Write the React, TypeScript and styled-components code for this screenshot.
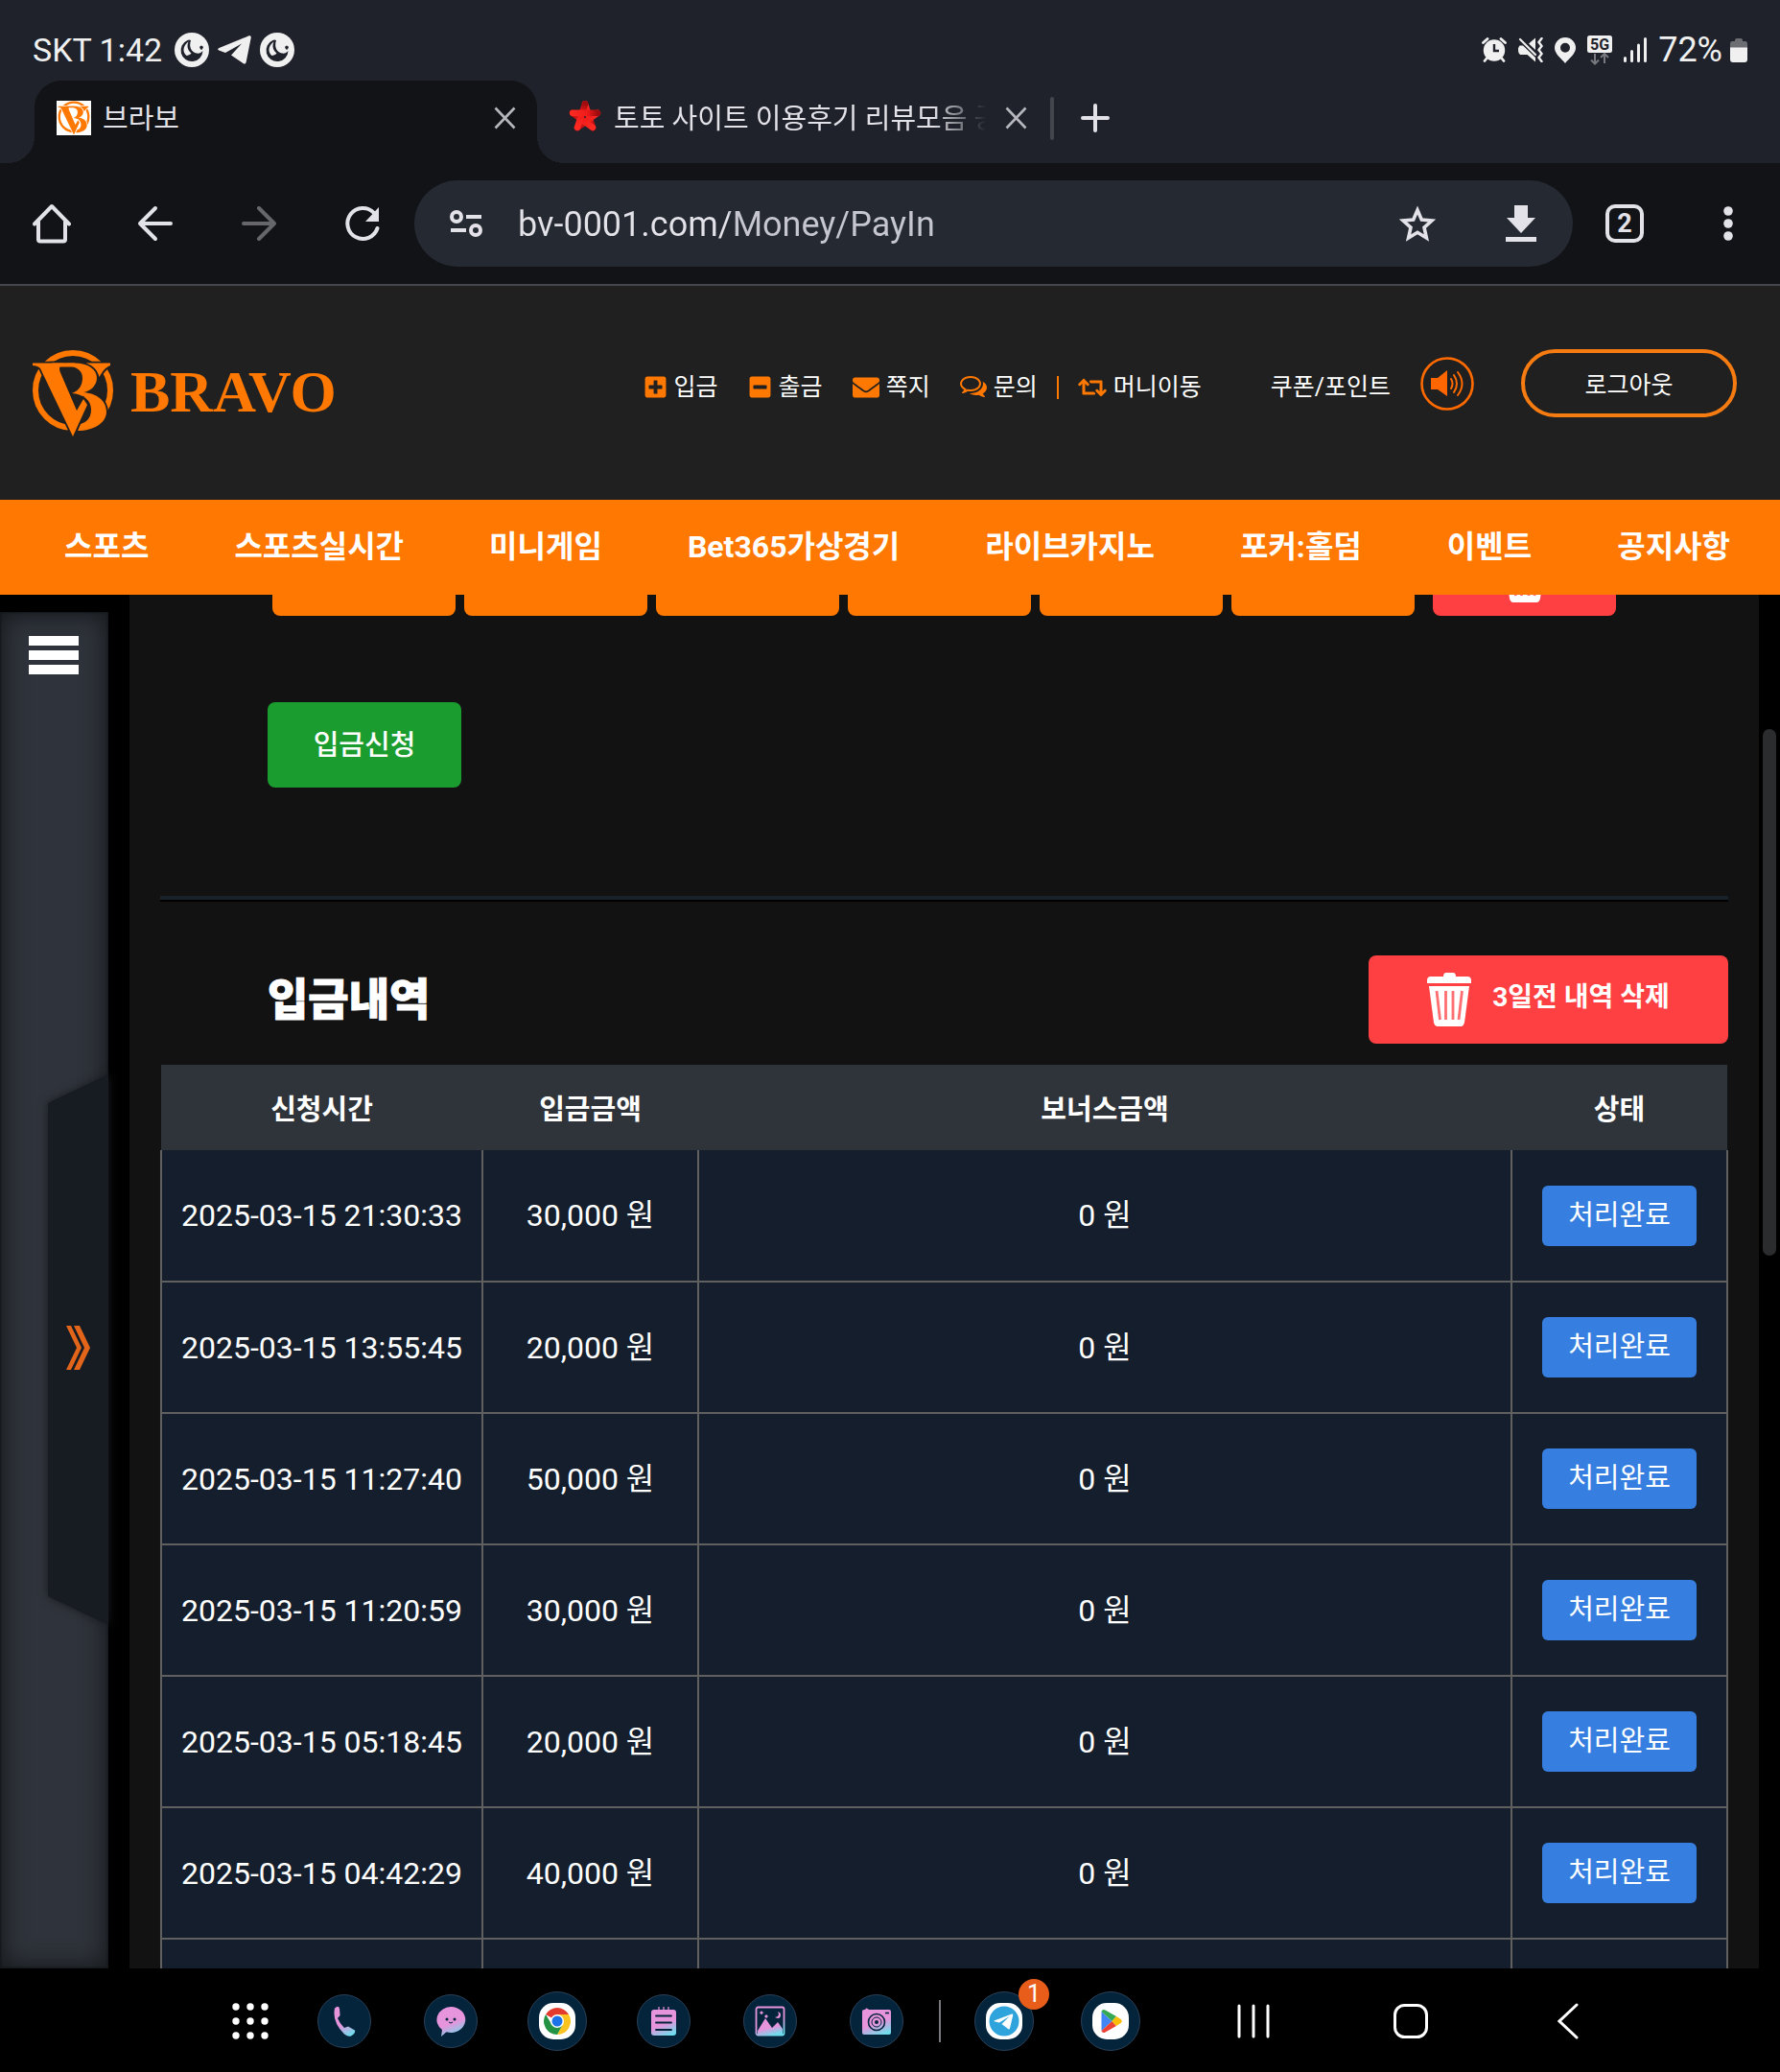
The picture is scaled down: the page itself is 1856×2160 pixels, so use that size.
import React from "react";
import styled, { createGlobalStyle } from "styled-components";
import { FaPlusSquare, FaMinusSquare, FaEnvelope, FaRetweet } from "react-icons/fa";

const ORANGE = "#ff7802";
const FONT = '"Roboto", "Noto Sans CJK KR", sans-serif';

const GlobalStyle = createGlobalStyle`
  *, *::before, *::after { box-sizing: border-box; }
  body { margin: 0; background: #000; font-family: ${FONT}; color: #fff; }
  button, input { font-family: inherit; color: inherit; }
  button { border: 0; padding: 0; background: none; cursor: pointer; }
  a { color: inherit; text-decoration: none; }
  svg { display: block; flex: none; }
`;

const Screen = styled.div`
  display: flex;
  flex-direction: column;
  height: 100vh;
  overflow: hidden;
`;

/* ---------- status bar ---------- */

const StatusBar = styled.div`
  display: flex;
  align-items: center;
  justify-content: space-between;
  height: 84px;
  padding: 20px 34px 0;
  background: #1f222b;
  color: #f0f0f0;
  line-height: 40px;
`;

const StatusGroup = styled.div<{ $gap: number }>`
  display: flex;
  align-items: center;
  gap: ${(p) => p.$gap}px;
`;

const Clock = styled.span`
  margin-right: 4px;
  font-size: 34px;
`;

const Charge = styled.span`
  font-size: 36px;
`;

/* ---------- browser tabs ---------- */

const TabStrip = styled.div`
  display: flex;
  align-items: center;
  height: 86px;
  padding-left: 36px;
  background: #1f222b;
  color: #e3e2e8;
`;

const Tab = styled.div<{ $active?: boolean }>`
  position: relative;
  display: flex;
  align-items: center;
  gap: 12px;
  width: ${(p) => (p.$active ? 524 : 535)}px;
  height: 86px;
  padding: ${(p) => (p.$active ? "0 22px 8px 23px" : "0 24px 8px 32px")};
  border-radius: 28px 28px 0 0;
  background: ${(p) => (p.$active ? "#121317" : "transparent")};

  &::before,
  &::after {
    content: ${(p) => (p.$active ? '""' : "none")};
    position: absolute;
    bottom: 0;
    width: 28px;
    height: 28px;
  }
  &::before {
    right: 100%;
    background: radial-gradient(circle at 0 0, transparent 28px, #121317 28px);
  }
  &::after {
    left: 100%;
    background: radial-gradient(circle at 100% 0, transparent 28px, #121317 28px);
  }
`;

const TabTitle = styled.span<{ $fade?: boolean }>`
  flex: 1;
  min-width: 0;
  padding-top: 2px;
  overflow: hidden;
  white-space: nowrap;
  font-size: 29px;
  line-height: 40px;
  mask-image: ${(p) => (p.$fade ? "linear-gradient(to right, #000 84%, transparent 98%)" : "none")};
`;

const TabDivider = styled.span`
  width: 4px;
  height: 45px;
  margin-bottom: 8px;
  border-radius: 2px;
  background: #44464e;
`;

const NewTab = styled.button`
  margin: 0 0 8px 28px;
`;

/* ---------- browser toolbar ---------- */

const Toolbar = styled.div`
  display: flex;
  align-items: center;
  height: 128px;
  padding: 0 49px 0 34px;
  border-bottom: 2px solid #46474c;
  background: #121317;
`;

const ToolButtons = styled.div`
  display: flex;
  width: 398px;
  gap: 68px;
`;

const ToolButton = styled.button<{ $dim?: boolean }>`
  opacity: ${(p) => (p.$dim ? 0.4 : 1)};
`;

const AddressBar = styled.div`
  display: flex;
  align-items: center;
  flex: 1;
  height: 90px;
  padding: 0 38px 0 36px;
  border-radius: 45px;
  background: #252932;
`;

const Address = styled.input`
  flex: 1;
  min-width: 0;
  margin: 0 34px 0 36px;
  padding: 2px 0 0;
  border: 0;
  outline: 0;
  font-size: 36px;
  line-height: 48px;
  color: #e3e2e8;
  background: linear-gradient(to right, #e3e2e8 220px, #c5c6d0 220px) text;
  -webkit-text-fill-color: transparent;
`;

const DownloadButton = styled.button`
  margin-left: 73px;
`;

const TabCount = styled.button`
  display: grid;
  place-items: center;
  width: 40px;
  height: 40px;
  margin: 0 83px 0 34px;
  border: 4px solid #e3e2e8;
  border-radius: 10px;
  font-size: 27px;
  font-weight: 700;
  line-height: 28px;
  color: #e3e2e8;
`;

/* ---------- site header ---------- */

const SiteHeader = styled.header`
  display: flex;
  align-items: center;
  justify-content: space-between;
  height: 223px;
  padding: 0 45px 0 34px;
  background: #202020;
`;

const Brand = styled.a`
  display: flex;
  align-items: center;
  gap: 18px;
  color: ${ORANGE};
`;

const BrandName = styled.span`
  padding-bottom: 4px;
  font-family: "Liberation Serif", serif;
  font-size: 62px;
  font-weight: 700;
  line-height: 80px;
`;

const HeaderTools = styled.div`
  display: flex;
  align-items: center;
  padding-bottom: 20px;
  font-size: 25px;
  line-height: 36px;
`;

const HeaderLinks = styled.nav`
  display: flex;
  align-items: center;
  gap: 31px;
  padding-top: 8px;
`;

const HeaderLink = styled.a`
  display: flex;
  align-items: center;
  gap: 7px;

  svg { color: ${ORANGE}; }
`;

const LinkPair = styled.div`
  display: flex;
  align-items: center;
  gap: 20px;
`;

const Bar = styled.span`
  width: 2px;
  height: 24px;
  background: ${ORANGE};
`;

const CouponLink = styled.a`
  margin-left: 72px;
  padding-top: 8px;
`;

const SpeakerButton = styled.button`
  margin: 0 49px 0 31px;
`;

const LogoutButton = styled.button`
  width: 225px;
  height: 71px;
  padding-bottom: 2px;
  border: 4px solid #f67c12;
  border-radius: 36px;
  font-size: 25px;
`;

const MainNav = styled.nav`
  display: flex;
  align-items: center;
  justify-content: space-between;
  height: 99px;
  padding: 0 52px 2px 67px;
  background: ${ORANGE};
  font-size: 32px;
  font-weight: 700;
  line-height: 44px;
`;

/* ---------- page body ---------- */

const Body = styled.div`
  display: flex;
  flex: 1;
  min-height: 0;
`;

const Sidebar = styled.aside`
  display: flex;
  flex-direction: column;
  width: 113px;
  margin: 18px 22px 0 0;
  background: #2f333b;
  box-shadow: inset 0 0 2px 1px #14171a, inset 0 0 24px 4px #171b1e;
`;

const MenuButton = styled.button`
  display: flex;
  flex-direction: column;
  gap: 5px;
  width: 52px;
  margin: 25px 0 417px 30px;
`;

const MenuLine = styled.span`
  height: 10px;
  background: #fff;
`;

const HandleShadow = styled.div`
  align-self: flex-end;
  filter: drop-shadow(0 0 5px #171b1e);
`;

const Handle = styled.button`
  display: grid;
  place-items: center;
  width: 63px;
  height: 574px;
  padding: 0 0 4px;
  background: #171b22;
  clip-path: polygon(100% 0, 0 30px, 0 544px, 100% 100%);
`;

const Panel = styled.main`
  flex: 1;
  min-width: 0;
  padding: 0 32px;
  overflow: hidden;
  background: #121212;
`;

const Gutter = styled.div`
  width: 22px;
  padding: 140px 4px 0;
`;

const Thumb = styled.div`
  height: 549px;
  border-radius: 7px;
  background: #2b2c2e;
`;

const AmountRow = styled.div`
  display: flex;
  align-items: flex-end;
  gap: 9px;
  height: 22px;
  margin-left: 117px;
  overflow: hidden;
`;

const AmountButton = styled.button<{ $danger?: boolean }>`
  display: flex;
  align-items: flex-end;
  justify-content: center;
  flex: none;
  width: 191px;
  height: 84px;
  margin-left: ${(p) => (p.$danger ? 10 : 0)}px;
  padding-bottom: 14px;
  border-radius: 8px;
  background: ${(p) => (p.$danger ? "#ff4042" : ORANGE)};
`;

const SubmitButton = styled.button`
  display: block;
  width: 202px;
  height: 89px;
  margin: 90px 0 113px 112px;
  border-radius: 8px;
  background: #1b9c2e;
  font-size: 29px;
  font-weight: 500;
  line-height: 40px;
`;

const Rule = styled.hr`
  height: 6px;
  margin: 0;
  border: 0;
  border-bottom: 2px solid #000;
  background: #18222b;
`;

const SectionHead = styled.div`
  display: flex;
  align-items: center;
  justify-content: space-between;
  padding: 56px 0 22px 112px;
`;

const SectionTitle = styled.h2`
  margin: 0;
  font-size: 46px;
  font-weight: 900;
  line-height: 64px;
  -webkit-text-stroke: 1px #fff;
`;

const DeleteButton = styled.button`
  display: flex;
  align-items: center;
  justify-content: center;
  gap: 22px;
  width: 375px;
  height: 92px;
  border-radius: 8px;
  background: #ff4042;
  font-size: 28px;
  font-weight: 700;
  line-height: 40px;
`;

const DeleteLabel = styled.span`
  padding-bottom: 4px;
`;

const History = styled.table`
  width: 100%;
  table-layout: fixed;
  border-collapse: collapse;
  text-align: center;
`;

const HeadCell = styled.th<{ $width?: number }>`
  width: ${(p) => (p.$width ? `${p.$width}px` : "auto")};
  height: 89px;
  padding: 0 0 2px;
  background: #2f333a;
  font-size: 29px;
  font-weight: 700;
`;

const Cell = styled.td`
  height: 137px;
  padding: 0;
  border: 2px solid #606060;
  border-top-width: 0;
  background: #151e2c;
  font-size: 32px;
  line-height: 44px;
`;

const Done = styled.span`
  display: inline-block;
  width: 161px;
  height: 63px;
  border-radius: 6px;
  background: #367fe0;
  font-size: 29px;
  line-height: 63px;
  vertical-align: middle;
`;

/* ---------- system dock ---------- */

const Dock = styled.footer`
  display: flex;
  align-items: center;
  justify-content: center;
  height: 108px;
  padding: 2px 139px 0 218px;
  background: #000;
`;

const DockSlot = styled.button<{ $width: number }>`
  display: grid;
  place-items: center;
  width: ${(p) => p.$width}px;
  height: 106px;
`;

const AppDisc = styled.span<{ $large?: boolean }>`
  position: relative;
  display: grid;
  place-items: center;
  width: ${(p) => (p.$large ? 62 : 56)}px;
  height: ${(p) => (p.$large ? 62 : 56)}px;
  border: 1px solid #2a4058;
  border-radius: 50%;
  background: #04243c;
`;

const Badge = styled.span`
  position: absolute;
  top: -14px;
  right: -17px;
  width: 32px;
  height: 32px;
  border-radius: 50%;
  background: #e85d1a;
  color: #fff;
  font-size: 25px;
  line-height: 32px;
  text-align: center;
`;

const DockDivider = styled.span`
  width: 2px;
  height: 44px;
  margin: 0 10px;
  background: #77797c;
`;

const DockGap = styled.span`
  width: 12px;
`;

/* ---------- drawings ---------- */

const MoonIcon = () => (
  <svg width="36" height="36" viewBox="0 0 36 36">
    <circle cx="18" cy="18" r="18" fill="#f0f0f0" />
    <path d="M13.500 8A11.500 11.500 0 1 0 29.500 19c-1.500 2-4 3-6.500 2.500-5-1-8.500-6-6-13.500-1-.8-2.500-.8-3.500 0Z" fill="#1f222b" />
    <path d="M14.500 9.500c-6 4-6.500 11-2 14.500 1.500-.2 4-1 5-2.500-4-3-5-7.500-3-12Z" fill="#f0f0f0" />
    <path d="M26 15q2-3 4 0-1 3-2 3t-2-3Z" fill="#1f222b" />
  </svg>
);

const PlaneIcon = () => (
  <svg width="35" height="30" viewBox="0 0 35 30" fill="#f0f0f0">
    <path d="M1.500 13 32 .6c2-.8 3 .2 2.700 2l-5 25c-.4 2-1.600 2.600-3.200 1.400L14 20.500 25 8.500 8 18 1.200 15.500c-1.600-.6-1.500-1.800.3-2.500Z" />
  </svg>
);

const AlarmIcon = () => (
  <svg width="26" height="26" viewBox="0 0 26 26" fill="none">
    <circle cx="13" cy="13.500" r="11.200" fill="#f0f0f0" />
    <path d="M1.500 5.500 6 1.500M24.500 5.500 20 1.500M5 22l-2 2.500M21 22l2 2.500" stroke="#f0f0f0" strokeWidth="2.800" strokeLinecap="round" />
    <path d="M13 7v7h5" stroke="#1f222b" strokeWidth="2.400" />
  </svg>
);

const MuteIcon = () => (
  <svg width="26" height="26" viewBox="0 0 26 26" fill="none">
    <path d="M1.500 8.500H5L18 21v4.500L9.500 18H2Q0 17 0 13.500t1.500-5ZM11 6.500 18 .5V13Z" fill="#f0f0f0" />
    <path d="M2 2 18 18" stroke="#f0f0f0" strokeWidth="2.200" strokeLinecap="round" />
    <path d="m24.500 1-3 4 3 4-3 4 3 4-3 4 3 4" stroke="#f0f0f0" strokeWidth="2.400" strokeLinecap="round" />
  </svg>
);

const PinIcon = () => (
  <svg width="22" height="27" viewBox="0 0 22 27" fill="#f0f0f0" fillRule="evenodd">
    <path d="M11 0a11 11 0 0 1 11 11c0 6-7 11-11 16C7 22 0 17 0 11A11 11 0 0 1 11 0Zm0 5.800a5 5 0 1 0 0 10 5 5 0 0 0 0-10Z" />
  </svg>
);

const FiveGIcon = () => (
  <svg width="26" height="32" viewBox="0 0 26 32">
    <rect width="26" height="18" y="1" rx="2.500" fill="#f0f0f0" />
    <text x="13" y="16" textAnchor="middle" fontFamily="Roboto, sans-serif" fontWeight="700" fontSize="16" fill="#1f222b">5G</text>
    <path d="M8 20v10M4 26.500l4 4 4-4M18 30V20M14 24l4-4 4 4" fill="none" stroke="#77797e" strokeWidth="2" />
  </svg>
);

const SignalIcon = () => (
  <svg width="24" height="26" viewBox="0 0 24 26" stroke="#f0f0f0" strokeWidth="3" strokeLinecap="round">
    <path d="M1.500 21.500v3M8.500 14.500v10M15.500 8v16.500M22.500 1.500v23" />
  </svg>
);

const BatteryIcon = () => (
  <svg width="18" height="25" viewBox="0 0 18 25">
    <path d="M5 2q0-2 2-2h4q2 0 2 2v1h3q2 0 2 3v5H0V6q0-3 2-3h3Z" fill="#6c6e74" />
    <path d="M0 9.500h18V22q0 3-3 3H3q-3 0-3-3Z" fill="#f0f0f0" />
  </svg>
);

const CloseIcon = () => (
  <svg width="23" height="24" viewBox="0 0 23 24" stroke="#b6b7bd" strokeWidth="2.600">
    <path d="M1.500 1.500l20 21M21.500 1.500l-20 21" />
  </svg>
);

const EmblemShapes = ({ gap }: { gap: string }) => (
  <g>
    <circle cx="42" cy="42" r="39" fill="none" stroke={ORANGE} strokeWidth="6" />
    <g fill={ORANGE} stroke={gap} strokeWidth="3.600" paintOrder="stroke">
      <path d="M56 13.500H81V16c-5 2-8 6-11.500 12C68 22 63 17 56 15Z" />
      <path d="M18 13.500H44C58 13.500 67 20 67 29c0 8-7 14-14 15 13 1 24 8 24 20 0 12-13 20-30 20l3-7c7-2 11-7 11-15 0-10-8-16-20-17 8-3 11-9 11-16 0-9-8-13-20-13Z" />
      <path d="M0 13.500H34c-6 2-7 5-5 10L46 63l7-12 4 6L42 90 8 19C6 17 3 16 0 16Z" />
    </g>
    <path d="M20 13.500H44v4H22Z" fill={ORANGE} />
  </g>
);

const BravoEmblem = () => (
  <svg width="84" height="90" viewBox="0 0 84 90">
    <EmblemShapes gap="#202020" />
  </svg>
);

const BravoFavicon = () => (
  <svg width="36" height="36" viewBox="-2 -1 88 92">
    <rect x="-4" y="-4" width="96" height="100" fill="#fff" />
    <EmblemShapes gap="#fff" />
  </svg>
);

const StarKnotFavicon = () => (
  <svg width="36" height="36" viewBox="-18 -17 36 36">
    <linearGradient id="ribbon" gradientUnits="userSpaceOnUse" x1="0" y1="-14" x2="8.500" y2="11.500">
      <stop offset="0" stopColor="#ff2a22" />
      <stop offset="0.600" stopColor="#ec1a1a" />
      <stop offset="1" stopColor="#9c0b0e" />
    </linearGradient>
    {[0, 72, 144, 216, 288].map((a) => (
      <path
        key={a}
        transform={`rotate(${a})`}
        d="M0-13.500 8 11"
        stroke="url(#ribbon)"
        strokeWidth="6.600"
        strokeLinecap="round"
      />
    ))}
  </svg>
);

const line = {
  fill: "none",
  stroke: "#e3e2e8",
  strokeWidth: 4,
  strokeLinecap: "round" as const,
  strokeLinejoin: "round" as const,
};

const HomeIcon = () => (
  <svg width="40" height="42" viewBox="0 0 40 42" {...line}>
    <path d="M2 21.500 20 3l18 18.500M6 19v18.500q0 2 2 2h24q2 0 2-2V19" />
  </svg>
);

const ArrowIcon = ({ right }: { right?: boolean }) => (
  <svg width="40" height="40" viewBox="0 0 40 40" {...line}>
    <path d={right ? "M4 20h32M20 4l16 16-16 16" : "M36 20H4M20 4 4 20l16 16"} />
  </svg>
);

const ReloadIcon = () => (
  <svg width="40" height="40" viewBox="0 0 40 40" {...line}>
    <path d="M35.500 25A16 16 0 1 1 32 9" />
    <path d="M37 3v15H23Z" fill="#e3e2e8" stroke="none" />
  </svg>
);

const TuneIcon = () => (
  <svg width="36" height="30" viewBox="0 0 36 30" {...line} strokeLinecap="butt">
    <circle cx="8" cy="8" r="5" />
    <circle cx="28" cy="22" r="5" />
    <path d="M18 8h16M2 22h16" />
  </svg>
);

const StarIcon = () => (
  <svg width="38" height="38" viewBox="0 0 38 38" fill="none" stroke="#e3e2e8" strokeWidth="3.600">
    <path d="m19 5 4.300 10 10.700 1-8 7.200 2.400 10.800L19 28.300 9.600 34 12 23.200 4 16l10.700-1Z" />
  </svg>
);

const DownloadIcon = () => (
  <svg width="32" height="40" viewBox="0 0 32 40" fill="#e3e2e8">
    <path d="M9 1h14v13h8L16 30 1 14h8ZM0 34h32v5H0Z" />
  </svg>
);

const MoreIcon = () => (
  <svg width="10" height="40" viewBox="0 0 10 40" fill="#e3e2e8">
    <circle cx="5" cy="7" r="4.800" />
    <circle cx="5" cy="20" r="4.800" />
    <circle cx="5" cy="33" r="4.800" />
  </svg>
);

const PlusIcon = () => (
  <svg width="30" height="30" viewBox="0 0 30 30" {...line}>
    <path d="M15 2v26M2 15h26" />
  </svg>
);

const CommentsIcon = () => (
  <svg width="28" height="24" viewBox="0 0 1792 1536" fill="currentColor">
    <path
      transform="matrix(1 0 0 -1 0 1280)"
      d="M704 1152q-153 0 -286 -52t-211.500 -141t-78.500 -191q0 -82 53 -158t149 -132l97 -56l-35 -84q34 20 62 39l44 31l53 -10q78 -14 153 -14q153 0 286 52t211.500 141t78.500 191t-78.500 191t-211.500 141t-286 52zM704 1280q191 0 353.500 -68.500t256.500 -186.500t94 -257t-94 -257t-256.500 -186.500t-353.500 -68.500q-86 0 -176 16q-124 -88 -278 -128q-36 -9 -86 -16h-3q-11 0 -20.500 8t-11.500 21q-1 3 -1 6.500t0.500 6.500t2 6l2.500 5t3.500 5.500t4 5t4.500 5t4 4.500q5 6 23 25t26 29.500t22.500 29t25 38.500t20.500 44q-124 72 -195 177t-71 224q0 139 94 257t256.500 186.500t353.500 68.500zM1526 111q10 -24 20.500 -44t25 -38.500t22.500 -29t26 -29.500t23 -25q1 -1 4 -4.500t4.500 -5t4 -5t3.500 -5.500l2.500 -5t2 -6t0.500 -6.500t-1 -6.500q-3 -14 -13 -22t-22 -7q-50 7 -86 16q-154 40 -278 128q-90 -16 -176 -16q-271 0 -472 132q58 -4 88 -4q161 0 309 45t264 129q125 92 192 212t67 254q0 77 -23 152q129 -71 204 -178t75 -230q0 -120 -71 -224.500t-195 -176.500z"
    />
  </svg>
);

const SpeakerIcon = () => (
  <svg width="56" height="56" viewBox="0 0 56 56" fill="none" stroke="#ff6a00">
    <circle cx="28" cy="28" r="26.500" strokeWidth="2.600" />
    <path d="M11 22h7l10-8v27l-10-7h-7Z" fill="#ff6600" stroke="none" />
    <path d="M32 23q3 5 0 10M35 19q6 9 0 18M39 16q9 12 0 24" strokeWidth="2" strokeLinecap="round" />
  </svg>
);

const TrashIcon = () => (
  <svg width="46" height="56" viewBox="0 0 46 56" fill="#fff">
    <path d="M17 4q0-4 3-4h7q3 0 3 4h12q4 0 4 4v3H0V8q0-4 4-4Z" />
    <path d="M2 14h42l-5 38q-1 4-4 4H11q-3 0-4-4Z" />
    <path d="m10 19 3.500 30M19.500 19v30M27 19v30M36.500 19 33 49" stroke="#ff6e70" strokeWidth="2.800" />
  </svg>
);

const ChevronsIcon = () => (
  <svg width="25" height="46" viewBox="0 0 25 46" fill="#e2651a">
    <path d="M0 0h5l11 23L5 46H0l11-23ZM8 0h6l11 23-11 23H8l11-23Z" />
  </svg>
);

const GridIcon = () => (
  <svg width="38" height="38" viewBox="0 0 38 38" fill="#fff">
    {[4, 19, 34].map((y) => [4, 19, 34].map((x) => <circle key={`${x}-${y}`} cx={x} cy={y} r="3.700" />))}
  </svg>
);

const CandyGradient = ({ id }: { id: string }) => (
  <linearGradient id={id} x1="0.300" y1="0" x2="0.700" y2="1">
    <stop offset="0.550" stopColor="#e694dc" />
    <stop offset="1" stopColor="#6fdcec" />
  </linearGradient>
);

const PhoneIcon = () => (
  <svg width="32" height="32" viewBox="0 0 32 32">
    <CandyGradient id="phone" />
    <path d="M6 2.500Q10-1 11 3l.6 7-2.600 3q2 5 7 10l4-1.500 7 4q1 3-4 6-3 1-7-2Q3 17 6 2.500Z" fill="url(#phone)" />
  </svg>
);

const ChatIcon = () => (
  <svg width="32" height="32" viewBox="0 0 32 32">
    <CandyGradient id="chat" />
    <path d="M16 1a15 13.500 0 1 1-4.500 26.300L6 32l1-7A15 13.500 0 0 1 16 1Z" fill="url(#chat)" />
    <circle cx="12" cy="14" r="1.500" fill="#04243c" />
    <circle cx="20" cy="14" r="1.500" fill="#04243c" />
    <path d="M14 17q2 2 4 0" stroke="#04243c" fill="none" />
  </svg>
);

const ChromeIcon = () => (
  <svg width="38" height="38" viewBox="0 0 38 38">
    <rect width="38" height="38" rx="15" fill="#fff" />
    <path d="M19 19 7 12A13.900 13.900 0 0 1 31 12Z" fill="#e33b2e" />
    <path d="M19 12H31A13.900 13.900 0 0 1 19 33L25 22Z" fill="#fcc31e" />
    <path d="M7 12A13.900 13.900 0 0 0 19 33L25 22 13 22Z" fill="#229342" />
    <circle cx="19" cy="19" r="7" fill="#fff" />
    <circle cx="19" cy="19" r="5.500" fill="#1a73e8" />
  </svg>
);

const NotesIcon = () => (
  <svg width="26" height="32" viewBox="0 0 26 32">
    <CandyGradient id="notes" />
    <rect y="4" width="26" height="27" rx="3" fill="url(#notes)" />
    <path d="M8 1v5M13 1v5M18 1v5" stroke="#e694dc" strokeWidth="1.200" />
    <path d="M5 10.500h16M5 17.500h16M5 25h16" stroke="#04243c" strokeWidth="1.800" strokeLinecap="round" />
  </svg>
);

const GalleryIcon = () => (
  <svg width="32" height="32" viewBox="0 0 32 32">
    <CandyGradient id="gallery" />
    <rect x="1.500" y="1.500" width="29" height="29" rx="2" fill="none" stroke="url(#gallery)" strokeWidth="1.800" />
    <path d="m3 26 8-13 7 10 6-6 5 7v6H3Z" fill="url(#gallery)" />
    <path d="M24 6q3 5-3 6 6 3 6-3 0-2-3-3ZM7 5l1 1.500L9.500 7 8 8 7 9.500 6 8 4.500 7 6 6.500ZM12 9l1 1 1 1-1 1-1 1-1-1-1-1 1-1Z" fill="#e694dc" />
  </svg>
);

const CameraIcon = () => (
  <svg width="32" height="32" viewBox="0 0 32 32">
    <CandyGradient id="camera" />
    <path d="M1 6q0-2 2-2h1q1-3 4 0h21q2 0 2 2v22q0 2-2 2H3q-2 0-2-2Z" fill="url(#camera)" />
    <circle cx="16" cy="17" r="8.500" fill="none" stroke="#04243c" strokeWidth="1.600" />
    <circle cx="16" cy="17" r="5" fill="none" stroke="#04243c" />
    <circle cx="16" cy="17" r="2" fill="#04243c" />
    <path d="M25 7.500h4" stroke="#04243c" strokeWidth="1.600" />
  </svg>
);

const TelegramIcon = () => (
  <svg width="38" height="38" viewBox="0 0 38 38">
    <rect width="38" height="38" rx="15" fill="#fff" />
    <circle cx="19" cy="19" r="15.500" fill="#2fa3dc" />
    <path d="M8.500 18.500 27 11.500q1.500-.3 1.200 1.500L25 26.500q-.5 1.500-2 .5L16.500 22l8-8-10.500 6.500-5.300-1.200Z" fill="#fff" />
  </svg>
);

const PlayIcon = () => (
  <svg width="38" height="38" viewBox="0 0 38 38">
    <rect width="38" height="38" rx="15" fill="#fff" />
    <path d="M9.500 9v20l11-10Z" fill="#4285f4" />
    <path d="M9.500 9q1-3 4-1.500L25 14l-4.500 5Z" fill="#34a853" />
    <path d="M9.500 29q1 3 4 1.500L25 24l-4.500-5Z" fill="#ea4335" />
    <path d="m25 14 5 3.200q1.800 1.800 0 3.600L25 24l-4.500-5Z" fill="#fbbc04" />
  </svg>
);

const RecentsIcon = () => (
  <svg width="34" height="36" viewBox="0 0 34 36" stroke="#fff" strokeWidth="3" strokeLinecap="round">
    <path d="M2 2v32M17 2v32M32 2v32" />
  </svg>
);

const HomeKeyIcon = () => (
  <svg width="36" height="36" viewBox="0 0 36 36" fill="none" stroke="#fff" strokeWidth="3">
    <rect x="1.500" y="1.500" width="33" height="33" rx="10" />
  </svg>
);

const BackKeyIcon = () => (
  <svg width="22" height="38" viewBox="0 0 22 38" fill="none" stroke="#fff" strokeWidth="3" strokeLinecap="round">
    <path d="M20 2 2 19l18 17" />
  </svg>
);

/* ---------- data ---------- */

const sections = ["스포츠", "스포츠실시간", "미니게임", "Bet365가상경기", "라이브카지노", "포커:홀덤", "이벤트", "공지사항"];

const deposits = [
  { time: "2025-03-15 21:30:33", amount: "30,000 원" },
  { time: "2025-03-15 13:55:45", amount: "20,000 원" },
  { time: "2025-03-15 11:27:40", amount: "50,000 원" },
  { time: "2025-03-15 11:20:59", amount: "30,000 원" },
  { time: "2025-03-15 05:18:45", amount: "20,000 원" },
  { time: "2025-03-15 04:42:29", amount: "40,000 원" },
];

const candyApps = [
  { name: "전화", icon: <PhoneIcon /> },
  { name: "메시지", icon: <ChatIcon /> },
  { name: "Chrome", icon: <ChromeIcon />, large: true },
  { name: "노트", icon: <NotesIcon /> },
  { name: "갤러리", icon: <GalleryIcon /> },
  { name: "카메라", icon: <CameraIcon /> },
];

export default function App() {
  return (
    <Screen>
      <GlobalStyle />

      <StatusBar>
        <StatusGroup $gap={9}>
          <Clock>SKT 1:42</Clock>
          <MoonIcon />
          <PlaneIcon />
          <MoonIcon />
        </StatusGroup>
        <StatusGroup $gap={12}>
          <AlarmIcon />
          <MuteIcon />
          <PinIcon />
          <FiveGIcon />
          <SignalIcon />
          <StatusGroup $gap={8}>
            <Charge>72%</Charge>
            <BatteryIcon />
          </StatusGroup>
        </StatusGroup>
      </StatusBar>

      <TabStrip>
        <Tab $active>
          <BravoFavicon />
          <TabTitle>브라보</TabTitle>
          <button aria-label="탭 닫기"><CloseIcon /></button>
        </Tab>
        <Tab>
          <StarKnotFavicon />
          <TabTitle $fade>토토 사이트 이용후기 리뷰모음 공</TabTitle>
          <button aria-label="탭 닫기"><CloseIcon /></button>
        </Tab>
        <TabDivider />
        <NewTab aria-label="새 탭"><PlusIcon /></NewTab>
      </TabStrip>

      <Toolbar>
        <ToolButtons>
          <ToolButton aria-label="홈"><HomeIcon /></ToolButton>
          <ToolButton aria-label="뒤로"><ArrowIcon /></ToolButton>
          <ToolButton aria-label="앞으로" $dim><ArrowIcon right /></ToolButton>
          <ToolButton aria-label="새로고침"><ReloadIcon /></ToolButton>
        </ToolButtons>
        <AddressBar>
          <button aria-label="사이트 정보"><TuneIcon /></button>
          <Address aria-label="주소" defaultValue="bv-0001.com/Money/PayIn" />
          <button aria-label="북마크"><StarIcon /></button>
          <DownloadButton aria-label="다운로드"><DownloadIcon /></DownloadButton>
        </AddressBar>
        <TabCount>2</TabCount>
        <button aria-label="더보기"><MoreIcon /></button>
      </Toolbar>

      <SiteHeader>
        <Brand href="#">
          <BravoEmblem />
          <BrandName>BRAVO</BrandName>
        </Brand>
        <HeaderTools>
          <HeaderLinks>
            <HeaderLink href="#"><FaPlusSquare width={24} height={26} size="" />입금</HeaderLink>
            <HeaderLink href="#"><FaMinusSquare width={24} height={26} size="" />출금</HeaderLink>
            <HeaderLink href="#"><FaEnvelope size={28} />쪽지</HeaderLink>
            <LinkPair>
              <HeaderLink href="#"><CommentsIcon />문의</HeaderLink>
              <Bar />
              <HeaderLink href="#"><FaRetweet size={30} />머니이동</HeaderLink>
            </LinkPair>
          </HeaderLinks>
          <CouponLink href="#">쿠폰/포인트</CouponLink>
          <SpeakerButton aria-label="소리"><SpeakerIcon /></SpeakerButton>
          <LogoutButton>로그아웃</LogoutButton>
        </HeaderTools>
      </SiteHeader>

      <MainNav>
        {sections.map((s) => (
          <a key={s} href="#">{s}</a>
        ))}
      </MainNav>

      <Body>
        <Sidebar>
          <MenuButton aria-label="메뉴">
            <MenuLine />
            <MenuLine />
            <MenuLine />
          </MenuButton>
          <HandleShadow>
            <Handle aria-label="펼치기"><ChevronsIcon /></Handle>
          </HandleShadow>
        </Sidebar>

        <Panel>
          <AmountRow>
            {[1, 2, 3, 4, 5, 6].map((n) => (
              <AmountButton key={n} aria-label="금액" />
            ))}
            <AmountButton $danger aria-label="삭제"><TrashIcon /></AmountButton>
          </AmountRow>
          <SubmitButton>입금신청</SubmitButton>
          <Rule />
          <SectionHead>
            <SectionTitle>입금내역</SectionTitle>
            <DeleteButton>
              <TrashIcon />
              <DeleteLabel>3일전 내역 삭제</DeleteLabel>
            </DeleteButton>
          </SectionHead>
          <History>
            <thead>
              <tr>
                <HeadCell $width={335}>신청시간</HeadCell>
                <HeadCell $width={225}>입금금액</HeadCell>
                <HeadCell>보너스금액</HeadCell>
                <HeadCell $width={225}>상태</HeadCell>
              </tr>
            </thead>
            <tbody>
              {deposits.map((d) => (
                <tr key={d.time}>
                  <Cell>{d.time}</Cell>
                  <Cell>{d.amount}</Cell>
                  <Cell>0 원</Cell>
                  <Cell><Done>처리완료</Done></Cell>
                </tr>
              ))}
              <tr>
                <Cell />
                <Cell />
                <Cell />
                <Cell />
              </tr>
            </tbody>
          </History>
        </Panel>

        <Gutter>
          <Thumb />
        </Gutter>
      </Body>

      <Dock>
        <DockSlot $width={86} aria-label="앱"><GridIcon /></DockSlot>
        {candyApps.map((a) => (
          <DockSlot key={a.name} $width={111} aria-label={a.name}>
            <AppDisc $large={a.large}>{a.icon}</AppDisc>
          </DockSlot>
        ))}
        <DockDivider />
        <DockSlot $width={111} aria-label="Telegram">
          <AppDisc $large>
            <TelegramIcon />
            <Badge>1</Badge>
          </AppDisc>
        </DockSlot>
        <DockSlot $width={111} aria-label="Play 스토어">
          <AppDisc $large><PlayIcon /></AppDisc>
        </DockSlot>
        <DockGap />
        <DockSlot $width={164} aria-label="최근 앱"><RecentsIcon /></DockSlot>
        <DockSlot $width={164} aria-label="홈 화면"><HomeKeyIcon /></DockSlot>
        <DockSlot $width={164} aria-label="이전"><BackKeyIcon /></DockSlot>
      </Dock>
    </Screen>
  );
}
